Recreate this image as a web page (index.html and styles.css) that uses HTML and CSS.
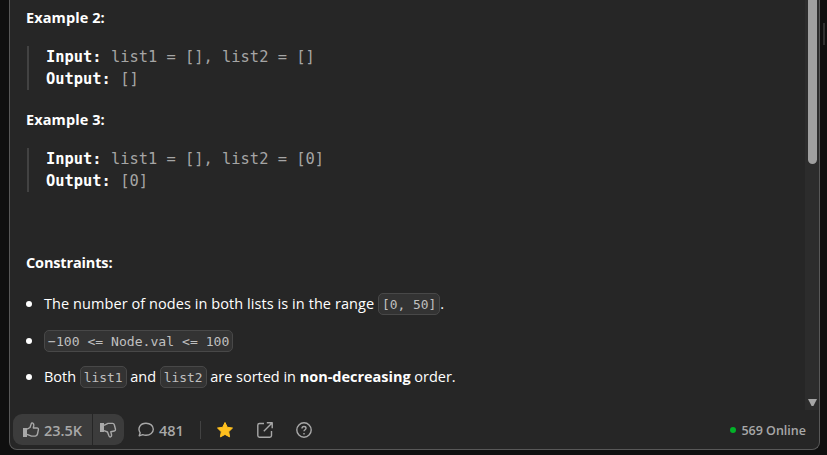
FILE: index.html
```
<!DOCTYPE html>
<html lang="en">
<head>
<meta charset="utf-8">
<title>Problem description</title>
<link rel="stylesheet" href="styles.css">
</head>
<body>
<main class="panel">
  <div class="body">
    <article class="content">
      <h3>Example 2:</h3>
      <pre><b>Input:</b> list1 = [], list2 = []
<b>Output:</b> []</pre>
      <h3>Example 3:</h3>
      <pre><b>Input:</b> list1 = [], list2 = [0]
<b>Output:</b> [0]</pre>
      <h3 class="constraints">Constraints:</h3>
      <ul>
        <li><span class="range">The number of nodes in both lists is in the range </span><code>[0, 50]</code>.</li>
        <li><code class="wide">−100 &lt;= Node.val &lt;= 100</code></li>
        <li>Both <code>list1</code> and <code>list2</code> are sorted in <b>non-decreasing</b> order.</li>
      </ul>
    </article>
    <div class="scrollbar"><div class="thumb"></div><div class="arrow"></div></div>
  </div>
  <footer>
    <div class="votes">
      <button class="up"><svg width="18" height="18" viewBox="0 0 18 18"><path class="solid" d="M1 7h4v9H1z"/><path d="M5 8.2 8 6.5 9.3 2.6Q9.7 1.5 10.8 2.1 12 2.8 11.8 4.4L11.3 7H15q1.6 0 1.4 1.6l-.9 4.4q-.4 1.9-2.2 2.1H9.5L5 13.3"/></svg><span>23.5K</span></button>
      <button class="down"><svg width="18" height="18" viewBox="0 0 18 18"><path class="solid" d="M1 2h4v9H1z"/><path d="M5 4.3 9 2.4h4.6q1.3 0 1.7 1.3l1.2 4.5q.3 1.5-1.1 1.8l-3.6.8.8 3.1q.2 1.5-1 2-1.1.3-1.6-.9L8.5 11 5 9.6"/></svg></button>
    </div>
    <button class="comments"><svg width="18" height="18" viewBox="0 0 18 18"><path d="M3.2 11.8C.2 7.3 3.1 2.2 9 2.2c4.2 0 7.3 2.5 7.3 6s-3.1 6-7.3 6c-1.2 0-2.3-.2-3.3-.6L2.2 14.8z"/></svg><span>481</span></button>
    <i class="divider"></i>
    <svg class="star" width="18" height="18" viewBox="0 0 18 18"><path d="m9 1.5 2.3 4.8 5.2.7-3.8 3.7.9 5.2L9 13.4l-4.6 2.5.9-5.2L1.5 7l5.2-.7z"/></svg>
    <svg class="share" width="18" height="18" viewBox="0 0 18 18"><path d="M8 2.5H3.5q-1.7 0-1.7 1.7v10.3q0 1.7 1.7 1.7h10.3q1.7 0 1.7-1.7V10M10.8 1.8h5.4v5.4M16 2 7.8 10.2"/></svg>
    <svg class="help" width="18" height="18" viewBox="0 0 18 18"><circle cx="9" cy="9" r="7.2"/><path d="M7 7.5c0-2.8 4-2.5 4-.3 0 1.5-2 1.5-2 3.1M9 12v1.4"/></svg>
    <div class="online"><i></i><span>569 Online</span></div>
  </footer>
</main>
<div class="gutter"></div>
</body>
</html>
```
FILE: styles.css
```
* { box-sizing: border-box; }
body {
  margin: 0;
  height: 455px;
  overflow: hidden;
  display: flex;
  background: #0f0f0f;
  color: #fff;
  font-family: "Open Sans", "Noto Sans", sans-serif;
  font-size: 14.5px;
}
.panel {
  margin-left: 9px;
  width: 811px;
  height: 450px;
  display: flex;
  flex-direction: column;
  background: #262626;
  border: 1px solid #585858;
  border-top: 0;
  border-radius: 0 0 8px 8px;
  overflow: hidden;
}
.body { height: 410px; display: flex; }
.content { flex: 1; padding: 7px 0 0 16px; }
h3 { margin: 0; font-size: 14.5px; line-height: 22px; font-weight: 700; letter-spacing: .1px; }
pre {
  margin: 17px 0 19px 1px;
  height: 44px;
  padding-left: 17px;
  border-left: 2px solid #424242;
  font: 15.4px/22px "DejaVu Sans Mono", monospace;
  color: #a5a5a5;
}
pre b { color: #fff; }
.constraints { margin-top: 60px; letter-spacing: -.15px; }
ul { margin: 19px 0 0; padding: 0; list-style: none; }
li { height: 22px; margin-bottom: 15px; line-height: 22px; display: flex; align-items: center; white-space: pre; }
li:last-child { margin-top: -1px; letter-spacing: -.02px; }
li::before { content: ""; width: 6px; height: 6px; margin: 0 12px 0 0; border-radius: 50%; background: #fff; }
.range { letter-spacing: .07px; }
code {
  height: 22px;
  padding: 1px 3px 0;
  border: 1px solid #484848;
  border-radius: 5px;
  background: #333;
  color: #c0c0c0;
  font: 12.9px/20px "DejaVu Sans Mono", monospace;
}
.wide { font-size: 13.1px; }
.scrollbar { width: 14px; background: #2c2c2c; position: relative; }
.thumb { width: 9px; height: 164px; margin-left: 3px; border-radius: 0 0 5px 5px; background: #9f9f9f; }
.arrow { position: absolute; left: 3px; bottom: 4px; width: 9px; height: 7px; background: #a6a6a6; clip-path: polygon(0 0, 100% 0, 60% 100%, 40% 100%); }
footer { height: 39px; padding: 4px 13px 4px 3px; display: flex; align-items: center; color: #a8a8a8; font-weight: 600; }
footer span { padding-top: 1px; }
svg { display: block; flex: none; fill: none; stroke: #a8a8a8; stroke-width: 1.4; stroke-linejoin: round; }
.solid { fill: #a8a8a8; stroke: none; }
button { all: unset; display: flex; align-items: center; gap: 4px; }
.votes { display: flex; gap: 1px; height: 31px; border-radius: 9px; overflow: hidden; }
.up, .down { background: #3c3c3c; height: 31px; }
.up { width: 79px; padding-left: 9px; box-sizing: border-box; }
.down { width: 31px; padding-left: 6px; box-sizing: border-box; }
.comments { margin-left: 13px; width: 63px; }
.divider { width: 1px; height: 18px; background: #424242; }
.star { margin-left: 15px; fill: #ffc01e; stroke: #ffc01e; stroke-width: 1; }
.share { margin-left: 22px; }
.help { margin-left: 21px; }
.online { margin-left: auto; display: flex; align-items: center; gap: 5px; font-size: 12.5px; }
.online i { width: 6px; height: 6px; border-radius: 50%; background: #02b128; }
.gutter { width: 2px; height: 22px; margin: 23px 0 0 3px; background: #303030; }
```
